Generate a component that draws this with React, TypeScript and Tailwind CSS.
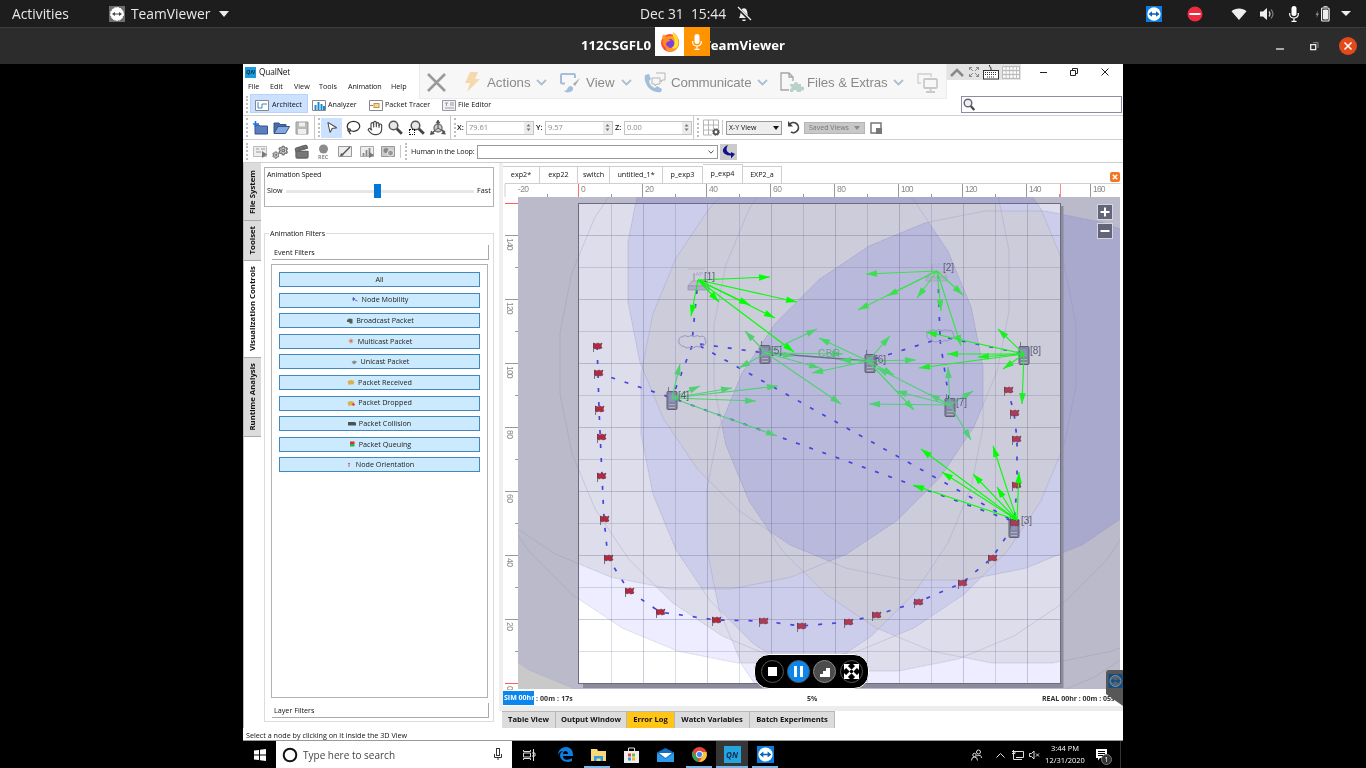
import React from "react";
import { Hand, MousePointer2, Search, Lasso, Clapperboard, Settings } from "lucide-react";

type P = [number, number];

/* ---------- network canvas ---------- */
const RANGES: P[] = [[701, 281], [936, 272], [1015, 519], [675, 397], [768, 355], [868, 363], [949, 404], [1022, 355]];
const ring = ([cx, cy]: P) =>
  Array.from({ length: 32 }, (_, i) => {
    const a = ((5.625 + i * 11.25) * Math.PI) / 180;
    return `${(cx + 309.5 * Math.cos(a)).toFixed(1)},${(cy + 309.5 * Math.sin(a)).toFixed(1)}`;
  }).join(" ");

const BURSTS: { from: P; color: string; to: P[] }[] = [
  { from: [766, 353], color: "#52cf72", to: [[745, 331], [817, 329], [794, 356], [843, 354], [739, 368], [820, 368], [841, 404]] },
  { from: [672, 398], color: "#52cf72", to: [[680, 364], [700, 386], [732, 388], [778, 386], [756, 401], [777, 436]] },
  { from: [868, 361], color: "#44d865", to: [[819, 338], [890, 336], [916, 360], [840, 360], [812, 373], [894, 375], [914, 410]] },
  { from: [950, 405], color: "#50cf78", to: [[877, 368], [948, 367], [973, 391], [869, 404], [896, 391], [929, 394], [971, 440]] },
  { from: [937, 271], color: "#3ce04e", to: [[866, 274], [858, 310], [887, 296], [917, 298], [941, 311], [963, 295], [961, 346]] },
  { from: [1024, 354], color: "#1cf024", to: [[998, 329], [926, 332], [947, 354], [978, 357], [919, 368], [1003, 369], [1022, 404]] },
  { from: [698, 280], color: "#00ff00", to: [[770, 277], [797, 302], [775, 318], [750, 305], [719, 302], [794, 352], [691, 316]] },
  { from: [1017, 520], color: "#00ff00", to: [[921, 449], [942, 472], [913, 485], [973, 474], [997, 487], [993, 446], [1019, 472]] },
];

function Arrow({ from, to, color }: { from: P; to: P; color: string }) {
  const dx = to[0] - from[0], dy = to[1] - from[1], l = Math.hypot(dx, dy);
  const ux = dx / l, uy = dy / l, bx = to[0] - ux * 11, by = to[1] - uy * 11;
  return (
    <g stroke={color} fill={color}>
      <line x1={from[0]} y1={from[1]} x2={to[0]} y2={to[1]} strokeWidth="1.1" />
      <polygon stroke="none" points={`${to[0]},${to[1]} ${bx - uy * 3.3},${by + ux * 3.3} ${bx + uy * 3.3},${by - ux * 3.3}`} />
    </g>
  );
}

const FLAGS: P[] = [[597, 346], [598, 373], [599, 409], [601, 437], [601, 476], [604, 519], [608, 558], [629, 591], [660, 612], [716, 620], [763, 621], [801, 626], [848, 622], [876, 615], [918, 602], [962, 583], [992, 558], [1014, 523], [1016, 485], [1016, 439], [1014, 413], [1008, 390]];
const LINKS = [
  "597,346 598,373 599,409 602,476 604,519 608,558 629,591 660,612 716,620 763,621 801,626 848,622 876,615 918,602 962,583 992,558 1014,525 1017,485 1017,439 1014,413 1008,390",
  "598,373 672,398 1015,522", "697,290 692,342", "692,346 672,398", "700,344 765,353", "700,346 1015,522",
  "938,275 940,337", "940,340 950,405", "932,341 868,361", "948,338 1024,354",
];
const PHONES: P[] = [[765, 354], [672, 400], [870, 363], [950, 407], [1024, 355], [1014, 528]];
const LABELS: [string, number, number][] = [["[1]", 704, 280], ["[2]", 943, 271], ["[3]", 1021, 524], ["[4]", 678, 399], ["[5]", 771, 354], ["[6]", 875, 363], ["[7]", 956, 406], ["[8]", 1030, 354]];

function Cloud({ x, y }: { x: number; y: number }) {
  return (
    <path
      transform={`translate(${x} ${y})`}
      d="M-13-1a3 3 0 0 1 3-4a3.500 2.600 0 0 1 6 0a3.500 2.600 0 0 1 6 0a3.500 2.600 0 0 1 6 0a3 3 0 0 1 5 3a3 3 0 0 1-3 5a3.500 2.600 0 0 1-6 1a3.500 2.600 0 0 1-6 1a3.500 2.600 0 0 1-6-1a3 3 0 0 1-4-2a2 2 0 0 1-1-3z"
      fill="none" stroke="#9495c6" strokeWidth="1"
    />
  );
}
function Ap({ x, y, faded }: { x: number; y: number; faded?: boolean }) {
  return (
    <g transform={`translate(${x} ${y})`} opacity={faded ? 0.6 : 1}>
      <path d="M-10-13h17" stroke="#b5b3c0" strokeWidth=".8" /><path d="M-4-9V1" stroke="#8a8898" strokeWidth=".9" />
      <text x="-2.500" y="-6" fontSize="5.500" fill="#aaa0d8">AP</text>
      <path d="M-10 4l4-5H8l3 5z" fill="#c0b8cc" stroke="#9d98ac" strokeWidth=".7" />
      <rect x="-10" y="4" width="21" height="4" fill="#b3a8d0" stroke="#938eac" strokeWidth=".7" />
    </g>
  );
}

function NetworkCanvas() {
  const inside = "1 1 .933 .867 .867 .8 .8 .8 .729";
  const insideB = "1 1 1 .925 .925 .925 .86 .86 .863";
  const outR = "0.79 .733 .733 .733 .733 .663 .663 .663 .663";
  const outB = "0.79 .796 .796 .796 .796 .804 .804 .804 .804";
  return (
    <svg width="618" height="507" viewBox="503 183 618 507" className="block shrink-0 font-['Liberation_Sans',sans-serif]">
      <defs>
        <filter id="fin" x="0" y="0" width="1" height="1" colorInterpolationFilters="sRGB">
          <feComponentTransfer>
            <feFuncR type="discrete" tableValues={inside} /><feFuncG type="discrete" tableValues={inside} /><feFuncB type="discrete" tableValues={insideB} />
          </feComponentTransfer>
        </filter>
        <filter id="fout" x="0" y="0" width="1" height="1" colorInterpolationFilters="sRGB">
          <feComponentTransfer>
            <feFuncR type="discrete" tableValues={outR} /><feFuncG type="discrete" tableValues={outR} /><feFuncB type="discrete" tableValues={outB} />
          </feComponentTransfer>
        </filter>
        <clipPath id="field"><rect x="579" y="204" width="482" height="480" /></clipPath>
        <clipPath id="view"><rect x="518" y="197" width="602" height="492" /></clipPath>
        <g id="rings">
          <rect x="518" y="197" width="602" height="492" fill="#000" />
          {RANGES.map((c, i) => <polygon key={i} points={ring(c)} fill="#1f1f1f" className="mix-blend-plus-lighter" />)}
        </g>
      </defs>
      <rect x="503" y="183" width="618" height="507" fill="#fff" />
      <g clipPath="url(#view)">
        <g filter="url(#fout)"><g clipPath="url(#view)" className="isolate"><use href="#rings" /></g></g>
        <path d="M1060 206h3.500v482H583v-4h477z" fill="#8c8b9c" />
        <g clipPath="url(#field)"><g filter="url(#fin)"><g clipPath="url(#view)" className="isolate"><use href="#rings" /></g></g></g>
        <g fill="none" stroke="#8888b4" strokeOpacity=".26">
          {RANGES.map((c, i) => <polygon key={i} points={ring(c)} />)}
        </g>
        <g stroke="#55557c" shapeRendering="crispEdges">
          {Array.from({ length: 14 }, (_, i) => <line key={i} x1={611.5 + 32 * i} x2={611.5 + 32 * i} y1="204" y2="684" strokeOpacity={i % 2 ? 0.29 : 0.2} />)}
          {Array.from({ length: 14 }, (_, i) => <line key={i} x1="579" x2="1060" y1={651.5 - 32 * i} y2={651.5 - 32 * i} strokeOpacity={i % 2 ? 0.29 : 0.2} />)}
        </g>
        <rect x="578.5" y="203.5" width="482" height="480" fill="none" stroke="#6c6c7c" />
        <g fill="none" stroke="#4444df" strokeWidth="1.7" strokeDasharray="4 10">
          {LINKS.map((p) => <polyline key={p} points={p} />)}
        </g>
        <line x1="766" y1="353" x2="868" y2="361" stroke="#66718a" strokeWidth="1.4" />
        <Cloud x={692} y={342} /><Cloud x={940} y={336} />
        <Ap x={698} y={282} /><Ap x={936} y={273} faded />
        {PHONES.map(([x, y]) => (
          <g key={x} transform={`translate(${x} ${y})`}>
            <path d="M-3.500-13v5" stroke="#77778e" />
            <rect x="-5" y="-8.500" width="10" height="18" rx="1" fill="#8585a0" stroke="#5f5f78" />
            <rect x="-3" y="-6" width="6" height="8" fill="#8794bd" />
            <path d="M-3 4.500h6M-3 7.500h6" stroke="#b0b0c0" />
          </g>
        ))}
        {FLAGS.map(([x, y], i) => (
          <g key={i} transform={`translate(${x} ${y})`}>
            <path d="M-3.500-3v9" stroke="#667" strokeWidth=".9" />
            <path d="M-3.500-3l2.500 1 2-1 2 1 2-1-1 3 1 2-3 1-2-1-2 1-1.500-1z" fill={i > 9 ? "#b23a55" : "#b8283c"} stroke="#5a3040" strokeWidth=".6" />
          </g>
        ))}
        {BURSTS.map((b) => b.to.map((t, i) => <Arrow key={`${b.from}${i}`} from={b.from} to={t} color={b.color} />))}
        <text x="818" y="357" fontSize="10" fill="#62a884" textLength="22">CBR</text>
        {LABELS.map(([t, x, y]) => <text key={t} x={x} y={y} fontSize="10" fill="#5c5c74">{t}</text>)}
        {[212, 231].map((y) => (
          <g key={y}>
            <rect x="1097.500" y={y - 7.5} width="15" height="15" fill="#63637a" stroke="#d5d5e0" />
            <path d={y === 212 ? "M1100.500 212h9M1105 207.500v9" : "M1100.500 231h9"} stroke="#fff" strokeWidth="2" />
          </g>
        ))}
      </g>
      <path d="M505 197V183.500H1120.500" fill="none" stroke="#cfcfcf" />
      <g fontSize="8.500" fill="#8a8a8a">
        {Array.from({ length: 10 }, (_, i) => {
          const x = 514.5 + 64 * i;
          return (
            <g key={i}>
              {i > 0 && <line x1={x} x2={x} y1="184" y2="197" stroke={i === 1 ? "#ff6b6b" : "#999"} />}
              <line x1={x + 33} x2={x + 33} y1="194" y2="197" stroke="#999" />
              <text x={i === 0 ? 518 : x + 2.5} y="192" textLength={i === 1 ? 4.5 : i < 6 ? (i === 0 ? 11 : 9) : 12.5}>{-20 + 20 * i}</text>
            </g>
          );
        })}
        <line x1="1060.500" x2="1060.500" y1="184" y2="197" stroke="#ff8a8a" />
        {Array.from({ length: 8 }, (_, i) => {
          const y = 235.5 + 64 * i;
          return (
            <g key={i}>
              {i < 7 && <line x1="505" x2="518" y1={y} y2={y} stroke="#999" />}
              {i < 7 && <line x1="515" x2="518" y1={y + 32} y2={y + 32} stroke="#999" />}
              <text transform={`translate(507 ${i === 7 ? 686 : y + 2.5}) rotate(90)`} textLength={i < 3 ? 12.5 : i < 7 ? 9 : 4.5}>{140 - 20 * i}</text>
            </g>
          );
        })}
        <path d="M505 203.500h13M505 683.500h13" stroke="#ff5c5c" />
      </g>
    </svg>
  );
}

/* ---------- small shared pieces ---------- */
const Handle = ({ className = "" }: { className?: string }) => <div className={`w-0 shrink-0 self-stretch border-l-2 border-dotted border-[#bdbdbd] my-0.5 ${className}`} />;
const Sep = ({ className = "" }: { className?: string }) => <div className={`w-px shrink-0 self-stretch bg-[#c8c8c8] ${className}`} />;

function TvLogo({ size }: { size: number }) {
  return (
    <svg width={size} height={size} viewBox="0 0 16 16" className="shrink-0">
      <rect width="16" height="16" fill="#0d7be0" /><circle cx="8" cy="8" r="6.700" fill="#fff" />
      <path d="M2.500 8l3.500-2.800v2h4v-2L13.500 8 10 10.800v-2H6v2z" fill="#0a62b8" />
    </svg>
  );
}
function Ico({ w = 14, h = 14, className = "", children }: { w?: number; h?: number; className?: string; children: React.ReactNode }) {
  return <svg width={w} height={h} viewBox={`0 0 ${w} ${h}`} className={`shrink-0 ${className}`} fill="none">{children}</svg>;
}
const Chev = () => <Ico w={11} h={7}><path d="M1 1l4.500 4.500L10 1" stroke="#a9bfd3" strokeWidth="1.800" /></Ico>;
const Lens = ({ className = "" }: { className?: string }) => (
  <Ico w={15} h={15} className={className}>
    <circle cx="5.500" cy="5.500" r="4.300" fill="#e4e8ea" stroke="#555" strokeWidth="1.500" />
    <path d="M8.800 8.800l5 5" stroke="#444" strokeWidth="2.800" />
  </Ico>
);
const MicGlyph = ({ className = "" }: { className?: string }) => (
  <Ico w={10} h={16} className={className}><rect x="2.500" y="0" width="5" height="10" rx="2.500" fill="#fff" /><path d="M.7 7v1.500a4.300 3.500 0 0 0 8.600 0V7M5 12v3M2.500 15.300h5" stroke="#fff" strokeWidth="1.200" /></Ico>
);

function Spin({ value }: { value: string }) {
  return (
    <div className="flex h-[14px] w-[68px] shrink-0 items-center border border-[#c4c4c4] bg-white pl-0.5 text-[#8a8a8a]">
      <span className="flex-1">{value}</span>
      <div className="flex h-full w-[9px] items-center justify-center bg-[#ececec]">
        <Ico w={5} h={9}><path d="M.5 3.500L2.500 1l2 2.500zM.5 5.500L2.500 8l2-2.500z" fill="#777" /></Ico>
      </div>
    </div>
  );
}

/* ---------- desktop bars ---------- */
function TopBar() {
  return (
    <div className="flex h-[27px] shrink-0 items-center bg-[#1d1d1d] pl-3 text-[13.800px] text-[#e8e8e8]">
      <span className="w-[97px] pt-px">Activities</span>
      <Ico w={16} h={16} className="mr-[6px]"><rect width="16" height="16" fill="#6d6d6d" /><circle cx="8" cy="8" r="6.500" fill="#fff" stroke="#fff" strokeDasharray="2 1" /><path d="M3 8l3-2v1.500h4V6l3 2-3 2V8.500H6V10z" fill="#444" /></Ico>
      <span className="w-[88px] whitespace-nowrap pt-px">TeamViewer</span>
      <Ico w={10} h={6}><path d="M0 0h10L5 6z" fill="#eee" /></Ico>
      <span className="ml-[411px] w-[96px] whitespace-pre pt-px text-[13.800px]">Dec 31  15:44</span>
      <Ico w={16} h={16}><path d="M3 12c2-2 1-7 3-9 1-1 3-1 4 0 2 2 1 7 3 9zM6.500 13.500h3v1.500h-3z" fill="#eee" /><path d="M1 1l14 14" stroke="#1d1d1d" strokeWidth="3" /><path d="M2 1l13 13" stroke="#eee" strokeWidth="1.200" /></Ico>
      <div className="ml-[394px] flex items-center">
        <TvLogo size={16} />
        <Ico w={16} h={16} className="ml-[25px]"><circle cx="8" cy="8" r="7.500" fill="#ef2b41" /><path d="M2.500 8h11" stroke="#fff" strokeWidth="2" /></Ico>
        <Ico w={16} h={14} className="ml-[28px]"><path d="M8 13L.5 4.200C4.500 .5 11.500 .5 15.500 4.200z" fill="#eee" /></Ico>
        <Ico w={16} h={14} className="ml-3"><path d="M1 4.500h3L8 1v12L4 9.500H1z" fill="#eee" /><path d="M10 4.500q2 2.500 0 5" stroke="#ccc" strokeWidth="1.300" /><path d="M12 2.500q4 4.500 0 9" stroke="#777" strokeWidth="1.300" /></Ico>
        <MicGlyph className="ml-[14px]" />
        <Ico w={16} h={16} className="ml-[16px]"><path d="M3 4.500L.5 9H2l-.5 3L4 7.500H2.500z" fill="#888" /><rect x="6.600" y="2" width="7.500" height="13" rx="1" stroke="#eee" strokeWidth="1.200" /><path d="M8.500 .7h4M8.500 4h4v9h-4z" stroke="#eee" fill="#eee" /></Ico>
        <Ico w={10} h={6} className="ml-[10px]"><path d="M0 0h10L5 5z" fill="#eee" /></Ico>
      </div>
    </div>
  );
}
function TitleBar() {
  return (
    <div className="relative flex h-[37px] shrink-0 items-center border-t border-[#3d3d3d] bg-[#2c2c2c] text-white">
      <div className="ml-[581px] flex w-[204px] justify-between whitespace-nowrap text-[13.200px] font-bold"><span>112CSGFL0</span><span>TeamViewer</span></div>
      <Ico w={9} h={12} className="ml-[491px]"><path d="M0 9h8" stroke="#eee" strokeWidth="1.300" /></Ico>
      <Ico w={9} h={9} className="ml-[25px]"><path d="M.7 2.700h5v5h-5z" stroke="#eee" strokeWidth="1.300" /><path d="M3 .6h5V6" stroke="#888" /></Ico>
      <Ico w={18} h={18} className="ml-[20px]"><circle cx="9" cy="9" r="9" fill="#e2491b" /><path d="M5.500 5.500l7 7m0-7l-7 7" stroke="#fff" strokeWidth="1.500" /></Ico>
      <div className="absolute left-[655px] top-[-1px] flex h-[29px]">
        <div className="flex w-[29px] items-center justify-center bg-white">
          <Ico w={22} h={22}>
            <circle cx="11" cy="12" r="9" fill="#ff4a3d" /><path d="M3 6l2-3 2 3 3-1c3 1 5 0 4-4 4 3 7 8 6 13-2 6-8 8-12 6z" fill="#ff9a1f" /><path d="M14 1c5 5 6 9 5 14-2 3-4 3-6 2 4-4 3-9 1-12z" fill="#ffdf3a" /><circle cx="10.500" cy="12.500" r="4.700" fill="#7a3fe0" /><path d="M4 8c3-2 5 0 8 1-2 2-4 1-5 4 0 2 2 3 4 3-4 3-9-2-7-8z" fill="#ff8a20" />
          </Ico>
        </div>
        <div className="flex w-[26px] items-center justify-center bg-[#ff9400]"><MicGlyph /></div>
      </div>
    </div>
  );
}

/* ---------- application window ---------- */
function RemoteBar() {
  const label = "text-[13.300px] text-[#8a8a8a] font-['Liberation_Sans',sans-serif]";
  return (
    <div className="absolute left-[176px] top-0 flex items-start">
      <div className="flex h-[35px] w-[528px] items-center border border-t-0 border-[#ebebeb] bg-[#f7f7f7] pl-[7px] pt-[3px]">
        <Ico w={19} h={19}><path d="M1 1l17 17M18 1L1 18" stroke="#9a9a9a" strokeWidth="2.600" /></Ico>
        <Ico w={16} h={21} className="ml-[18px] mr-[7px]"><path d="M6 0h8l-3 7h5L3 20l3-9H1z" fill="#f5d9ac" /></Ico>
        <span className={`${label} w-[49px]`}>Actions</span><Chev />
        <Ico w={21} h={21} className="ml-[13px] mr-[5px]"><path d="M5 11.500H2A1 1 0 0 1 1 10.500V3a1 1 0 0 1 1-1h12a1 1 0 0 1 1 1v3" stroke="#a3bedb" strokeWidth="2" /><path d="M20 6l-5 8-2-2z" fill="#aaa" /><path d="M4 19c4 0 3-5 7-5 3 1 3 5-1 6-3 1-5 0-6-1z" fill="#a3bedb" /></Ico>
        <span className={`${label} w-[35px]`}>View</span><Chev />
        <Ico w={23} h={21} className="ml-[12px] mr-[4px]"><path d="M1 3l4-1 2 5-2 2c1 4 3 6 6 7l2-2 5 3-1 3C7 22-1 12 1 3z" fill="#a3bedb" /><path d="M12 1h9v7h-3l-1 2v-2M8 6h8v6h-3l-2 2v-2H8z" stroke="#b5b5b5" fill="#f7f7f7" /></Ico>
        <span className={`${label} w-[86px] tracking-[-0.15px]`}>Communicate</span><Chev />
        <Ico w={24} h={21} className="ml-[12px] mr-[3px]"><path d="M9 18H1V1h8l4 4v4M9 1v4h4" stroke="#a5a5a5" strokeWidth="1.300" /><path d="M10 12h4a2 2 0 1 1 4 0h3v3a2 2 0 1 1 0 3v2h-4a2 2 0 0 0-4 0h-3v-3a1.500 1.500 0 1 0 0-3z" fill="#b9d2c8" /></Ico>
        <span className={`${label} w-[86px] whitespace-nowrap tracking-[-0.1px]`}>Files &amp; Extras</span><Chev />
        <Ico w={21} h={20} className="ml-[13px]"><path d="M4 10H1V1h13v3" stroke="#d9d9d9" strokeWidth="1.800" /><rect x="7" y="6" width="13" height="9" rx="1" stroke="#c9c9c9" strokeWidth="1.800" fill="#f7f7f7" /><path d="M13.500 15v3M9 19h9" stroke="#c9c9c9" strokeWidth="1.800" /></Ico>
      </div>
      <div className="flex h-[16px] w-[74px] items-center bg-[#e3e3e3] pl-[3px]">
        <Ico w={14} h={9}><path d="M1 8l6-6 6 6" stroke="#8a8a8a" strokeWidth="2.500" /></Ico>
        <Ico w={10} h={10} className="ml-[5px]"><path d="M.5 3V.5H3M.5 .5L4 4M7 .5h2.500V3M9.500 .5L6 4M.5 7v2.500H3M.5 9.500L4 6M7 9.500h2.500V7M9.500 9.500L6 6" stroke="#888" /></Ico>
        <Ico w={16} h={15} className="ml-[4px]"><path d="M8 5V3L6.500 1V0" stroke="#333" /><rect x=".5" y="5.500" width="15" height="8.500" stroke="#333" fill="#fff" /><path d="M2 7.500h12M2 9.500h12M4 12h8" stroke="#333" strokeDasharray="1 1" /></Ico>
        <Ico w={18} h={13} className="ml-[3px]"><rect width="18" height="13" fill="#bdbdbd" /><path d="M1 2.500h16M1 6.500h16M1 10.500h16" stroke="#fff" strokeWidth="2.600" strokeDasharray="2.600 .9" /></Ico>
      </div>
    </div>
  );
}

const miniBox = "M.5 1.500h13v10H.5z";

function Header() {
  return (
    <>
      <div className="flex h-[15px] shrink-0 items-center pl-[2px] pt-px text-[8.300px]">
        <div className="mr-[3px] flex h-[11px] w-[11px] items-center justify-center bg-[#1b9dd9] text-[6px] font-bold italic text-[#0b2c50]">QN</div>
        <span className="tracking-[-0.15px]">QualNet</span>
        <div className="-mt-px ml-auto flex items-center pr-[14px]">
          <Ico w={8} h={8}><path d="M0 4.500h7" stroke="#222" /></Ico>
          <Ico w={8} h={8} className="ml-[22px]"><path d="M.5 2.500h5v5h-5zM2.500 2V.5h5v5H6" stroke="#222" /></Ico>
          <Ico w={8} h={8} className="ml-[23px]"><path d="M.5 .5l7 7m0-7l-7 7" stroke="#222" /></Ico>
        </div>
      </div>
      <div className="flex h-[15px] shrink-0 items-center pl-[5px]">
        <span className="w-[22px]">File</span><span className="w-[24px]">Edit</span><span className="w-[25px]">View</span><span className="w-[29px]">Tools</span><span className="w-[43px] tracking-[-0.1px]">Animation</span><span>Help</span>
      </div>
      <div className="flex h-[22px] shrink-0 items-center border-b border-[#d0d0d0] pl-[3px]">
        <Handle />
        <div className="ml-[2px] flex h-[19px] w-[58px] items-center gap-[3px] self-start border border-[#b8d3fb] bg-[#cce0ff] pl-[4px] pt-[3px]">
          <Ico h={12}><path d={miniBox} fill="#fff" stroke="#888" /><path d="M3 3v6h4V5h5" stroke="#3a86c0" /></Ico>Architect
        </div>
        <div className="ml-[4px] flex w-[57px] items-center gap-[2px] pt-px"><Ico h={12}><path d={miniBox} fill="#fff" stroke="#888" /><path d="M3.500 11V6M6.500 11V3M9.500 11V5M12 11V7" stroke="#1c8ad0" strokeWidth="2" /></Ico>Analyzer</div>
        <div className="flex w-[73px] items-center gap-[2px] pt-px"><Ico h={12}><path d={miniBox} fill="#fff" stroke="#888" /><rect x="5" y="4.500" width="5" height="4" fill="#f6dc8a" stroke="#b99a4a" /><path d="M1 6.500h3" stroke="#c66" /></Ico>Packet Tracer</div>
        <div className="flex items-center gap-[2px] pt-px"><Ico h={12}><path d={miniBox} fill="#f1f1f4" stroke="#999" /><path d="M3 4h3M4.500 4v3M8 4h4M8 6h4M3 9h9" stroke="#99a" /></Ico>File Editor</div>
        <div className="ml-auto mr-px flex h-[17px] w-[161px] items-center border border-[#8c8ca4] bg-white pl-px"><Ico w={12} h={13}><circle cx="5" cy="5" r="3.800" fill="#eef" stroke="#666" strokeWidth="1.400" /><path d="M7.800 8l3.500 4" stroke="#444" strokeWidth="2.200" /></Ico></div>
      </div>
      <div className="flex h-[24px] shrink-0 items-center border-b border-[#cfcfcf] pl-[3px] text-[7.500px]">
        <Handle />
        <Ico w={15} className="ml-[5px]"><path d="M2 4h4l1 1h7.500v8H2z" fill="#5b7fbe" stroke="#34558c" /><path d="M2.500 0v6M0 3h6" stroke="#1870e8" strokeWidth="1.500" /></Ico>
        <Ico w={17} className="ml-[5px]"><path d="M1 12V2h5l1 1.500h6V6" fill="#486ca8" stroke="#34558c" /><path d="M1 12.500L5 5.500h11.500l-4 7z" fill="#86a8dc" stroke="#34558c" /></Ico>
        <Ico w={14} className="ml-[5px]"><path d="M1 1h12v12H1z" fill="#b9b9b9" stroke="#9b9b9b" /><path d="M4 1.500h6v4H4zM3 8h8v5H3z" fill="#eee" /></Ico>
        <Sep className="ml-[5px]" /><Handle className="ml-[3px]" />
        <div className="ml-[1px] flex h-[20px] w-[21px] items-center justify-center bg-[#cce0ff]"><MousePointer2 size={13} color="#444" fill="#fff" strokeWidth={1.800} className="rotate-[10deg]" /></div>
        <Lasso size={15} color="#333" className="ml-[4px]" />
        <Hand size={16} color="#444" strokeWidth={1.700} className="ml-[6px]" />
        <Lens className="ml-[5px]" />
        <div className="relative ml-[7px] flex"><Lens /><div className="absolute -left-px bottom-0 h-[6px] w-[6px] border border-dotted border-black" /></div>
        <Ico w={16} h={16} className="ml-[5px]"><path d="M8 0v8L1 14M8 8l7 4" stroke="#666" strokeWidth="1.500" /><circle cx="8" cy="8" r="4" fill="#ccc" stroke="#777" strokeWidth="1.500" /><path d="M8 1v7L2 13M8 8l6 4" stroke="#555" /><path d="M0 15l1-4.500L5 14zM16 14.500l-5-.5 3-3.500zM5.500 3L8 0l2.500 3z" fill="#555" /></Ico>
        <Sep className="ml-[4px]" /><Handle className="ml-[3px]" />
        <b className="ml-[1px] w-[9px] font-semibold">X:</b><Spin value="79.61" />
        <b className="ml-[2px] w-[9px] font-semibold">Y:</b><Spin value="9.57" />
        <b className="ml-[2px] w-[9px] font-semibold">Z:</b><Spin value="0.00" />
        <Sep className="ml-[1px]" /><Handle className="ml-[3px]" />
        <Ico w={17} h={17} className="ml-[4px]"><path d="M.5 1h15v9M.5 1v15H9M5.500 1v15M10.500 1v9M.5 6h15M.5 11h10" stroke="#b5b5b5" /><circle cx="13" cy="13" r="2.300" stroke="#555" strokeWidth="1.800" /><circle cx="13" cy="13" r="3.400" stroke="#555" strokeDasharray="1.200 1.500" /></Ico>
        <Sep className="ml-[2px] my-1" />
        <div className="ml-[3px] flex h-[14px] w-[56px] items-center justify-between border border-[#999] bg-[#eee] px-[2px] text-[7px]">X-Y View<Ico w={6} h={4}><path d="M0 0h6L3 4z" fill="#111" /></Ico></div>
        <Ico w={13} h={13} className="ml-[5px]"><path d="M2.500 3.500A5 5 0 1 1 4 11" stroke="#444" strokeWidth="1.700" /><path d="M1 0v5.500h5z" fill="#444" /></Ico>
        <div className="ml-[4px] flex h-[12px] w-[61px] items-center justify-between border border-[#b5b5b5] bg-[#c8c8c8] px-[4px] text-[7px] text-[#777]">Saved Views<Ico w={6} h={4}><path d="M0 0h6L3 4z" fill="#8a8a8a" /></Ico></div>
        <Ico w={12} h={12} className="ml-[5px]"><path d="M1 1h10v10H1z" stroke="#777" strokeWidth="1.500" /><rect x="6" y="6" width="6" height="6" fill="#777" /></Ico>
      </div>
      <div className="flex h-[23px] shrink-0 items-center border-b border-[#cfcfcf] pl-[3px] pt-px">
        <Handle />
        <Ico className="ml-[5px]"><path d={miniBox} fill="#eee" stroke="#bbb" /><path d="M3 4h3M8 4h4M3 7h5" stroke="#999" /><path d="M9 6l5 3.500L9 13z" fill="#777" /></Ico>
        <div className="relative ml-[5px] flex w-[16px] items-end"><Settings size={8} color="#777" strokeWidth={3.500} /><Settings size={11} color="#777" strokeWidth={3.500} className="-ml-[2px] mb-[3px]" /></div>
        <Clapperboard size={16} color="#666" fill="#777" strokeWidth={2} className="ml-[6px]" />
        <Ico w={13} h={15} className="ml-[7px]"><circle cx="6.500" cy="5" r="4.500" fill="#8c8c8c" /><text x="1" y="14.500" fontSize="5.500" fontWeight="bold" fill="#8c8c8c">REC</text></Ico>
        <Ico className="ml-[8px]"><path d={miniBox} fill="#eee" stroke="#999" /><path d="M4 10L12 2" stroke="#555" strokeWidth="1.500" /><path d="M3 8l3 2-4 1.500z" fill="#555" /></Ico>
        <Ico className="ml-[8px]"><path d={miniBox} fill="#eee" stroke="#aaa" /><path d="M3.500 11V8M6.500 11V5M9.500 11V3" stroke="#888" strokeWidth="1.800" /><path d="M9 7l5 3-5 3z" fill="#777" /></Ico>
        <Ico className="ml-[7px]"><path d={miniBox} fill="#ccc" stroke="#999" /><circle cx="5" cy="5.500" r="2.500" fill="#888" /><circle cx="9.500" cy="8" r="3" fill="#999" stroke="#eee" /></Ico>
        <Sep className="ml-[5px] my-1" /><Handle className="ml-[4px]" />
        <span className="ml-[4px] w-[66px] whitespace-nowrap tracking-[-0.15px]">Human in the Loop:</span>
        <div className="flex h-[14px] w-[241px] shrink-0 items-center justify-end border border-[#999] bg-white pr-[3px]"><Ico w={6} h={4}><path d="M.5 .5L3 3.200 5.500 .5" stroke="#555" /></Ico></div>
        <div className="ml-[2px] flex h-[16px] w-[17px] shrink-0 items-center justify-center bg-[#cbcbcb]"><Ico><path d="M6 0C1 2-1 6 3 9q2 1.500 6 1.500V13.500l4-4.500-4-2v1.500C5 8 3 5 6 0z" fill="#12108a" /></Ico></div>
      </div>
    </>
  );
}

const FILTERS: [string, React.ReactNode][] = [
  ["All", null],
  ["Node Mobility", <path d="M2 1.500l2 1.500-2 1.500zM4 4l2.500 1" fill="#5a4fb8" stroke="#5a4fb8" strokeWidth=".8" />],
  ["Broadcast Packet", <path d="M2 3l2-1.500 3.500.5v4.500H5L4 5H2z" fill="#555d55" />],
  ["Multicast Packet", <path d="M4 1.500v5M1.500 4h5M2.500 2.500l3 3M5.500 2.500l-3 3" stroke="#d8694f" strokeWidth=".8" />],
  ["Unicast Packet", <path d="M1.500 4l2.500-1.500 3 1-1 1.500-2 1.500z" fill="#8d8d8d" />],
  ["Packet Received", <path d="M.5 3.500l2.500-1.500 4 .7v3.500l-5.500.5z" fill="#d9b24c" />],
  ["Packet Dropped", <><path d="M.5 3.500l2.500-1.500 4 .7v3.500l-5.500.5z" fill="#d9b24c" /><circle cx="6.500" cy="5.500" r="1.200" fill="#d33" /></>],
  ["Packet Collision", <path d="M-2 2h8.500l2 1v2.500H-2z" fill="#4c5252" />],
  ["Packet Queuing", <><rect x="2" y="1.500" width="4.500" height="2.500" fill="#e02c2c" /><rect x="2" y="4" width="4.500" height="2.500" fill="#26b34a" /></>],
  ["Node Orientation", <path d="M4 6V2M3.200 3L4 2l.8 1" stroke="#c46" strokeWidth=".8" />],
];

function SidePanel() {
  const tab = "flex w-[17px] items-center justify-center border-b border-r-0 border-[#aaa] text-[7.800px] font-bold";
  const v = "rotate-180 whitespace-nowrap [writing-mode:vertical-rl]";
  return (
    <div className="flex w-[256px] shrink-0">
      <div className="flex w-[17px] shrink-0 flex-col border-l border-[#bbb]">
        <div className={`${tab} h-[58px] bg-[#dcdcdc]`}><span className={v}>File System</span></div>
        <div className={`${tab} h-[40px] bg-[#dcdcdc]`}><span className={v}>Toolset</span></div>
        <div className={`${tab} h-[97px] bg-white`}><span className={v}>Visualization Controls</span></div>
        <div className={`${tab} h-[79px] bg-[#dcdcdc]`}><span className={v}>Runtime Analysis</span></div>
      </div>
      <div className="ml-[4px] mt-[4px] w-[230px]">
        <div className="h-[40px] border border-[#b2b2b2] px-[2px]">
          <div className="leading-[12px] tracking-[-0.2px]">Animation Speed</div>
          <div className="mt-[4px] flex h-[14px] items-center">
            <span className="w-[19px]">Slow</span>
            <div className="relative h-[3px] w-[188px] bg-[#e7e7e7]"><div className="absolute -top-[6px] left-[88px] h-[14px] w-[7px] bg-[#0078d7]" /></div>
            <span className="ml-[3px]">Fast</span>
          </div>
        </div>
        <div className="relative mt-[26px] h-[489px] border border-[#dcdcdc] px-[6px] pt-[11px]">
          <span className="absolute -top-[6px] left-[4px] bg-white px-px leading-[11px] tracking-[-0.1px]">Animation Filters</span>
          <div className="ml-px h-[15px] w-[217px] border-b border-r border-[#aaa] pl-[2px] leading-[14px]">Event Filters</div>
          <div className="mt-[4px] flex h-[434px] w-[217px] flex-col gap-[5.600px] border border-[#b2b2b2] px-[7px] pt-[7px]">
            {FILTERS.map(([name, icon]) => (
              <div key={name} className="flex h-[15px] shrink-0 items-center justify-center gap-[3px] border border-[#4387bd] bg-[#cbeafd] text-[#222]">
                {icon && <Ico w={8} h={8}>{icon}</Ico>}{name}
              </div>
            ))}
          </div>
          <div className="ml-px mt-[5px] h-[15px] w-[217px] border-b border-r border-[#aaa] pl-[2px] leading-[14px]">Layer Filters</div>
        </div>
      </div>
    </div>
  );
}

function PlayerControls() {
  const c = "flex h-[23px] w-[23px] items-center justify-center rounded-full border border-[#555]";
  return (
    <div className="absolute left-[511px] top-[590px] flex h-[35px] w-[115px] items-center gap-[3.400px] rounded-[15px] border border-white bg-black pl-[5.500px]">
      <div className={c}><div className="h-[9px] w-[9px] bg-white" /></div>
      <div className={`${c} gap-[3px] border-[#0a86ee] bg-[#0a86ee]`}><div className="h-[11px] w-[3px] bg-white" /><div className="h-[11px] w-[3px] bg-white" /></div>
      <div className={`${c} border-[#888] bg-[#4c4c4c]`}><Ico w={10} h={10}><path d="M0 10V7h3V4h3V1h4v9z" fill="#fff" /></Ico></div>
      <div className={c}><Ico w={17} h={17}><path d="M3 3l11 11M14 3L3 14" stroke="#fff" strokeWidth="2.500" /><path d="M1 1h6L1 7zM16 1h-6l6 6zM1 16h6l-6-6zM16 16h-6l6-6z" fill="#fff" /><circle cx="8.500" cy="8.500" r="1.700" fill="#000" /></Ico></div>
    </div>
  );
}

function Workspace() {
  const t = "flex items-center justify-center border border-l-0 border-b-0 border-[#cfcfcf] h-[17px]";
  const b = "flex h-[17px] items-center justify-center border-r border-t border-[#b8b8b8] bg-[#dcdcdc] font-bold whitespace-nowrap";
  return (
    <div className="flex w-[624px] shrink-0 flex-col">
      <div className="flex min-h-0 flex-1">
        <div className="w-[4px] bg-[#efefef]" />
        <div className="flex w-[620px] flex-col">
          <div className="flex h-[20px] items-end">
            <div className={`${t} w-[37px] border-l`}>exp2*</div><div className={`${t} w-[38px]`}>exp22</div><div className={`${t} w-[32px]`}>switch</div><div className={`${t} w-[53px]`}>untitled_1*</div><div className={`${t} w-[40px]`}>p_exp3</div><div className={`${t} h-[19px] w-[40px]`}>p_exp4</div><div className={`${t} w-[39px]`}>EXP2_a</div>
            <div className="ml-auto mr-[3px] flex h-[10px] w-[10px] items-center justify-center self-end rounded-[2px] bg-[#f47521] mb-px"><Ico w={6} h={6}><path d="M.8 .8l4.400 4.400m0-4.400L.8 5.200" stroke="#fff" strokeWidth="1.500" /></Ico></div>
          </div>
          <NetworkCanvas />
          <div className="flex h-[16px] items-center text-[7px] font-bold text-[#333]">
            <span className="h-[14px] w-[31px] overflow-hidden whitespace-nowrap bg-[#0a86ee] pl-px leading-[14px] text-white">SIM 00hr</span>
            <span className="ml-[2px] w-[271px] tracking-[0.1px]">: 00m : 17s</span><span>5%</span>
            <span className="ml-auto w-[81px] overflow-hidden whitespace-nowrap">REAL 00hr : 00m : 05s</span>
          </div>
          <div className="h-[5px] shrink-0 bg-[#ededed]" />
        </div>
      </div>
      <div className="flex h-[17px] pl-[3px] text-[7.600px]">
        <div className={`${b} w-[54px]`}>Table View</div><div className={`${b} w-[71px]`}>Output Window</div><div className={`${b} w-[48px] bg-[#ffc517]!`}>Error Log</div><div className={`${b} w-[75px]`}>Watch Variables</div><div className={`${b} w-[85px]`}>Batch Experiments</div>
      </div>
    </div>
  );
}

function Taskbar() {
  const cell = "relative flex h-[27px] items-center justify-center";
  const line = <div className="absolute bottom-0 left-[4px] right-[4px] h-[2px] bg-[#76b9ed]" />;
  return (
    <div className="flex h-[28px] w-[880px] shrink-0 items-center border-t border-[#9a9a9a] bg-black text-white">
      <div className="flex w-[33px] justify-center"><Ico w={12} h={12}><path d="M0 1.500L5 1v4.500H0zM6 .8L12 0v5.500H6zM0 6.500h5V11l-5-.5zM6 6.500h6V12l-6-.8z" fill="#fff" /></Ico></div>
      <div className="flex h-[27px] w-[236px] items-center bg-white pl-[6px] text-[#444]">
        <Ico w={16} h={16}><circle cx="8" cy="8" r="6.300" stroke="#111" strokeWidth="2" /></Ico>
        <span className="ml-[5px] flex-1 pt-px text-[10px]">Type here to search</span>
        <Ico w={8} h={13} className="mr-[10px]"><rect x="2.500" y=".5" width="3" height="7" stroke="#333" /><path d="M.5 6v3.500h7V6M4 9.500V12" stroke="#333" /></Ico>
      </div>
      <div className={`${cell} w-[34px]`}><Ico w={13} h={12}><path d="M.5 1v1.500h7V1M.5 11V9.500h7V11M.5 4h7v4h-7zM10.500 0v12M9 4h3v3H9" stroke="#ddd" /></Ico></div>
      <div className={`${cell} w-[34px] pl-1`}><Ico w={15} h={15}><path d="M0 8C0 3 4 0 8 0c5 0 7 4 7 8v1H5c0 5 6 4 9 2v3c-4 2-12 1-12-6 0-1 1-3 3-4-3 0-4 2-5 4zm5-1h5c0-4-5-4-5 0z" fill="#0c7fe0" /></Ico></div>
      <div className={`${cell} w-[34px] pl-[3px]`}><Ico w={16} h={14}><path d="M0 1h6l1 2h8v10H0z" fill="#f7d978" /><path d="M3 13V8h9v5H9.500v-2.500h-4V13z" fill="#2f9ce4" /></Ico>{line}</div>
      <div className={`${cell} w-[34px]`}><Ico w={15} h={16}><path d="M4.500 5V1h6v4" stroke="#ddd" /><rect y="4" width="15" height="12" fill="#eee" /><path d="M4 6.500h3v3H4z" fill="#e8452c" /><path d="M8 6.500h3v3H8z" fill="#7cbb2e" /><path d="M4 10.500h3v3H4z" fill="#2a9be5" /><path d="M8 10.500h3v3H8z" fill="#f5b71a" /></Ico></div>
      <div className={`${cell} w-[34px]`}><Ico w={17} h={14}><path d="M0 4.500L8.500 0 17 4.500V14H0z" fill="#0f6fc4" /><path d="M2 5h13L8.500 10z" fill="#fff" /><path d="M0 5l8.500 6L17 5v9H0z" fill="#2c9cea" /></Ico></div>
      <div className={`${cell} w-[34px]`}><Ico w={15} h={15}><circle cx="7.500" cy="7.500" r="7.500" fill="#e64435" /><path d="M1 4l4 6 2 5A7.500 7.500 0 0 1 1 4z" fill="#31a350" /><path d="M14.400 5H8l3 4-4 6A7.500 7.500 0 0 0 14.400 5z" fill="#fbc52d" /><circle cx="7.500" cy="7.500" r="3.200" fill="#4286f2" stroke="#fff" /></Ico>{line}</div>
      <div className={`${cell} w-[32px] bg-[#363636]`}><div className="flex h-[17px] w-[17px] items-center justify-center bg-[#25a5df] text-[8px] font-bold italic text-[#0b2c50]">QN</div><div className="absolute bottom-0 h-[2px] w-full bg-[#76b9ed]" /></div>
      <div className={`${cell} w-[34px] pl-px`}><TvLogo size={17} />{line}</div>
      <Ico w={11} h={12} className="ml-[189px]"><circle cx="7.500" cy="3" r="2" stroke="#ddd" /><circle cx="3.500" cy="6" r="1.700" stroke="#ddd" /><path d="M.5 11.500q0-3.500 3-3.500 3 0 3 3.500M5.500 7q5-2 5 2" stroke="#ddd" /></Ico>
      <Ico w={9} h={6} className="ml-[14px]"><path d="M.5 5.500l4-4 4 4" stroke="#ddd" /></Ico>
      <Ico w={12} h={10} className="ml-[7px]"><path d="M3 1.500h8.500v6H4M1.500 0v4M0 1.500h3v2H0M5 9.500h5M1.500 4v5.500H5" stroke="#ddd" /></Ico>
      <Ico w={11} h={10} className="ml-[5px]"><path d="M.5 3.500h2L5 1v8L2.500 6.500h-2zM7 3.500l3 3m0-3l-3 3" stroke="#ddd" /></Ico>
      <div className="ml-[3px] w-[44px] whitespace-nowrap pb-px text-center text-[7.500px] leading-[12px]">3:44 PM<br />12/31/2020</div>
      <div className="relative ml-[9px]"><Ico w={12} h={12}><path d="M0 0h11v9H4l-2 2.500V9H0z" fill="#fff" /><path d="M2 2.500h7M2 4.500h7M2 6.500h5" stroke="#000" /></Ico><div className="absolute left-[5px] top-[5px] flex h-[11px] w-[11px] items-center justify-center rounded-full border border-[#777] bg-[#333] text-[7px]">1</div></div>
      <div className="ml-auto mr-[2px] h-full w-px bg-[#333]" />
    </div>
  );
}

export default function App() {
  return (
    <div className="flex h-[768px] w-[1366px] flex-col overflow-hidden bg-black font-['Open_Sans','Noto_Sans',sans-serif]">
      <TopBar />
      <TitleBar />
      <div className="relative ml-[243px] flex h-[704px] w-[880px] flex-col text-[7.200px] leading-none text-[#111]">
        <div className="flex h-[676px] shrink-0 flex-col bg-white">
          <Header />
          <div className="flex h-[565px] shrink-0">
            <SidePanel />
            <Workspace />
          </div>
          <div className="pl-[3px] pt-[3px] leading-[9px]">Select a node by clicking on it inside the 3D View</div>
        </div>
        <Taskbar />
        <RemoteBar />
        <PlayerControls />
        <svg width="17" height="37" viewBox="0 0 17 37" className="absolute right-0 top-[606px]"><path d="M3 0h14v36L0 24V3q0-3 3-3z" fill="#575757" /><rect x="2.500" y="4" width="14" height="14" fill="#0d4f85" /><circle cx="9.500" cy="11" r="5.500" stroke="#87909a" fill="#55656f" /><path d="M4.500 11l3-2.500v1.700h4V8.500l3 2.500-3 2.500v-1.700h-4v1.700z" fill="#0d4f85" /></svg>
      </div>
    </div>
  );
}
